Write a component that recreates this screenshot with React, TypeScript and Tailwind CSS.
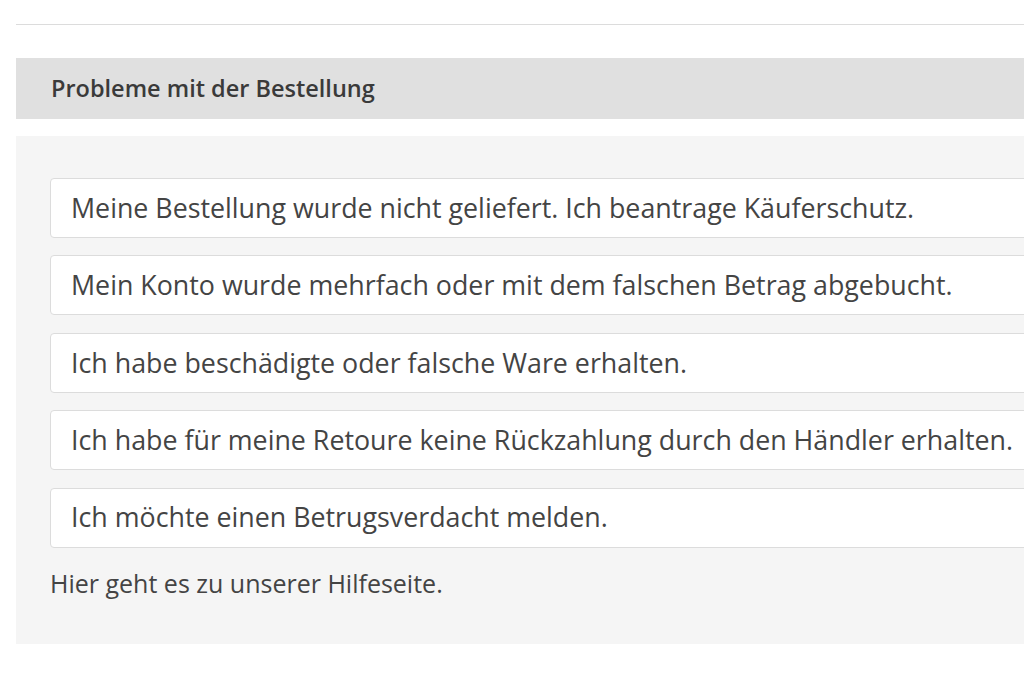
import React from "react";

const ISSUES = [
  "Meine Bestellung wurde nicht geliefert. Ich beantrage Käuferschutz.",
  "Mein Konto wurde mehrfach oder mit dem falschen Betrag abgebucht.",
  "Ich habe beschädigte oder falsche Ware erhalten.",
  "Ich habe für meine Retoure keine Rückzahlung durch den Händler erhalten.",
  "Ich möchte einen Betrugsverdacht melden.",
];

export default function App() {
  return (
    <div className="w-[1024px] h-[682px] overflow-hidden bg-white font-['Open_Sans',sans-serif]">
      <div className="w-[1120px] pl-4 pt-6">
        {/* Divider */}
        <div className="border-t border-[#dcdcdc]" />

        {/* Section header */}
        <div className="mt-[33px] h-[61px] bg-[#e0e0e0] flex items-center pl-[35px]">
          <h2 className="text-[23.5px] font-semibold text-[#3a3a3a]">
            Probleme mit der Bestellung
          </h2>
        </div>

        {/* Issue list */}
        <div className="mt-[17px] bg-[#f5f5f5] pl-[34px] pt-[42px] pb-[42px]">
          <div className="flex flex-col gap-[17.4px]">
            {ISSUES.map((text) => (
              <a
                key={text}
                href="#"
                className="h-[60px] flex items-center pl-[20px] bg-white border border-[#dcdcdc] rounded-[4px] text-[26.8px] text-[#444] whitespace-nowrap"
              >
                {text}
              </a>
            ))}
          </div>
          <p className="mt-[17px] text-[25px] text-[#444]">
            Hier geht es zu unserer Hilfeseite.
          </p>
        </div>
      </div>
    </div>
  );
}
